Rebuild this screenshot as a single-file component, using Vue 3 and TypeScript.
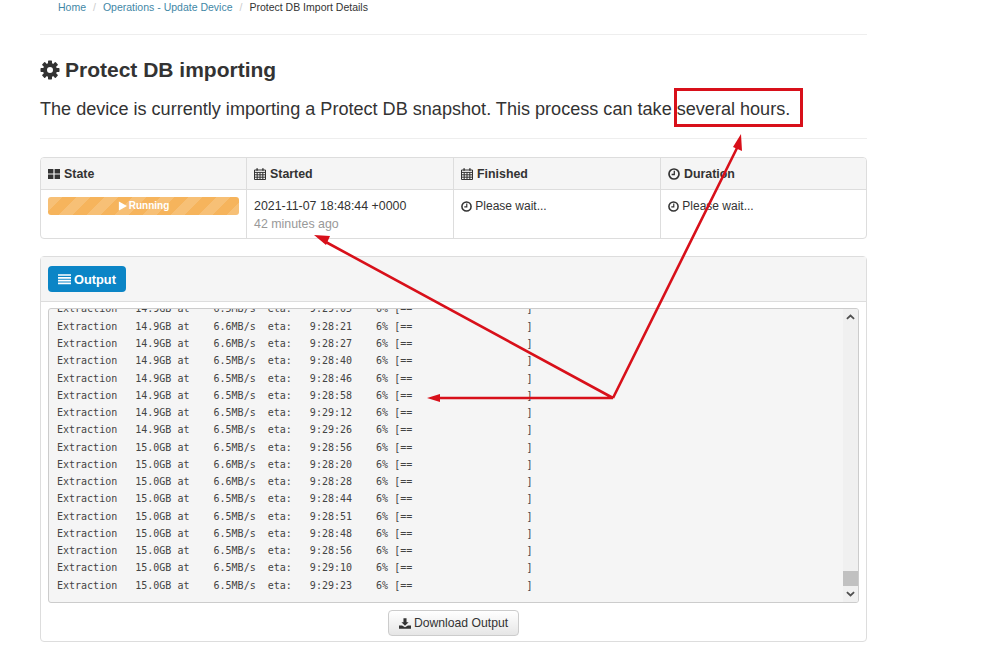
<script setup lang="ts">
interface Row { size: string; rate: string; eta: string }
const raw = '14.9 6.5 9:29:05|14.9 6.6 9:28:21|14.9 6.6 9:28:27|14.9 6.5 9:28:40|14.9 6.5 9:28:46|14.9 6.5 9:28:58|14.9 6.5 9:29:12|14.9 6.5 9:29:26|15.0 6.5 9:28:56|15.0 6.6 9:28:20|15.0 6.6 9:28:28|15.0 6.5 9:28:44|15.0 6.5 9:28:51|15.0 6.5 9:28:48|15.0 6.5 9:28:56|15.0 6.5 9:29:10|15.0 6.5 9:29:23'
const rows: Row[] = raw.split('|').map((r) => {
  const [size, rate, eta] = r.split(' ')
  return { size, rate, eta }
})
const log = rows
  .map((r) => `Extraction   ${r.size}GB at    ${r.rate}MB/s  eta:   ${r.eta}    6% [==                   ]`)
  .join('\n')
const teeth = [0, 45, 90, 135, 180, 225, 270, 315]
</script>

<template>
  <div class="page">
    <div class="content">
      <nav class="crumbs">
        <a>Home</a><span class="sep">/</span><a>Operations - Update Device</a><span class="sep">/</span><span>Protect DB Import Details</span>
      </nav>
      <hr class="rule first" />
      <h1 class="title">
        <svg class="gear" viewBox="0 0 24 24">
          <rect v-for="t in teeth" :key="t" x="9.6" y="0.6" width="4.8" height="6" rx="0.8" :transform="`rotate(${t} 12 12)`" />
          <path fill-rule="evenodd" d="M12 3.6a8.4 8.4 0 1 0 0 16.8 8.4 8.4 0 0 0 0-16.8zm0 4.8a3.6 3.6 0 1 1 0 7.2 3.6 3.6 0 0 1 0-7.2z" />
        </svg>
        Protect DB importing
      </h1>
      <p class="lead">The device is currently importing a Protect DB snapshot. This process can take several hours.</p>
      <hr class="rule second" />

      <section class="status">
        <div class="th">
          <svg class="ico" viewBox="0 0 12 12"><path d="M0 1h5.4v4.4H0zM6.6 1H12v4.4H6.6zM0 6.6h5.4V11H0zM6.6 6.6H12V11H6.6z" /></svg>
          State
        </div>
        <div class="th">
          <svg class="ico" viewBox="0 0 12 12"><use href="#cal" /></svg>
          Started
        </div>
        <div class="th">
          <svg class="ico" viewBox="0 0 12 12"><use href="#cal" /></svg>
          Finished
        </div>
        <div class="th last">
          <svg class="ico" viewBox="0 0 12 12"><use href="#clk" /></svg>
          Duration
        </div>
        <div class="td">
          <div class="bar">
            <svg class="play" viewBox="0 0 10 10"><path d="M1 0l9 5-9 5z" /></svg>
            Running
          </div>
        </div>
        <div class="td">
          <div>2021-11-07 18:48:44 +0000</div>
          <div class="ago">42 minutes ago</div>
        </div>
        <div class="td wait">
          <svg class="ico small" viewBox="0 0 12 12"><use href="#clk" /></svg>
          Please wait...
        </div>
        <div class="td wait last">
          <svg class="ico small" viewBox="0 0 12 12"><use href="#clk" /></svg>
          Please wait...
        </div>
      </section>

      <section class="panel">
        <header class="panel-head">
          <button class="btn-output" type="button">
            <svg class="ico bars" viewBox="0 0 14 12"><path d="M0 .8h14v1.8H0zM0 3.8h14v1.8H0zM0 6.8h14v1.8H0zM0 9.8h14v1.8H0z" /></svg>
            Output
          </button>
        </header>
        <div class="panel-body">
          <div class="logbox">
            <pre class="log">{{ log }}</pre>
            <div class="scroll">
              <svg class="chev" viewBox="0 0 10 6"><path d="M1 5l4-3.6L9 5" /></svg>
              <div class="track"><div class="thumb"></div></div>
              <svg class="chev" viewBox="0 0 10 6"><path d="M1 1l4 3.6L9 1" /></svg>
            </div>
          </div>
          <div class="actions">
            <button class="btn-dl" type="button">
              <svg class="ico dl" viewBox="0 0 14 12"><path d="M5.2 0h3.6v4.4h2.4L7 8.6 2.8 4.4h2.4zM0 8.4h3.6L7 10.4l3.4-2H14V12H0z" /></svg>
              Download Output
            </button>
          </div>
        </div>
      </section>
    </div>

    <svg class="marks" width="999" height="658" viewBox="0 0 999 658">
      <defs>
        <g id="cal">
          <path fill="none" stroke="currentColor" stroke-width="1" d="M.5 2h11v9.5H.5zM.5 4.4h11M3.2 4.4v7M6 4.4v7M8.8 4.4v7M.5 6.8h11M.5 9.2h11" />
          <path fill="currentColor" d="M2.4.2h1.4v2.6H2.4zM8.2.2h1.4v2.6H8.2z" />
        </g>
        <g id="clk">
          <circle cx="6" cy="6" r="5" fill="none" stroke="currentColor" stroke-width="1.7" />
          <path fill="none" stroke="currentColor" stroke-width="1.3" d="M6.3 2.8v3.7H3.6" />
        </g>
      </defs>
      <rect class="box" x="675.5" y="89.5" width="126" height="36" />
      <path class="line" d="M613 398L738 146M613 398L324 241M613 398H438" />
      <path class="head" d="M741 134l1 17-9-4zM314 235l16 1-4 9zM427 398l13-4v8z" />
    </svg>
  </div>
</template>

<style>
html, body { margin: 0; background: #fff; }
</style>

<style scoped>
.page {
  position: relative;
  width: 999px;
  height: 658px;
  overflow: hidden;
  background: #fff;
  color: #333;
  font-family: "Liberation Sans", Arial, sans-serif;
}
.content {
  width: 827px;
  margin-left: 40px;
}
.crumbs {
  height: 14px;
  padding-left: 18px;
  font-size: 10.5px;
  line-height: 14px;
  color: #333;
}
.crumbs a { color: #3f87a6; }
.sep { padding: 0 7px; color: #ccc; }
.rule {
  margin: 0;
  border: 0;
  border-top: 1px solid #eee;
}
.first { margin-top: 20px; }
.title {
  display: flex;
  align-items: center;
  gap: 5px;
  margin: 21px 0 0;
  font-size: 21px;
  line-height: 28px;
  font-weight: 700;
  color: #333;
}
.gear { width: 20px; height: 20px; fill: #333; }
.lead {
  margin: 13px 0 0;
  font-size: 18.08px;
  line-height: 24px;
  white-space: nowrap;
}
.second { margin-top: 17px; }
.status {
  display: grid;
  grid-template-columns: 206px 207px 207px 1fr;
  grid-template-rows: 32px 48px;
  box-sizing: border-box;
  height: 82px;
  margin-top: 18px;
  border: 1px solid #ddd;
  border-radius: 4px;
  font-size: 12.4px;
  overflow: hidden;
}
.th {
  display: flex;
  align-items: center;
  gap: 4px;
  padding-left: 7px;
  background: #f5f5f5;
  border-right: 1px solid #ddd;
  border-bottom: 1px solid #ddd;
  font-weight: 700;
  color: #333;
}
.td {
  padding: 7px 7px 0;
  border-right: 1px solid #ddd;
  line-height: 18px;
}
.wait { font-size: 12px; }
.last { border-right: 0; }
.ico {
  width: 12px;
  height: 12px;
  fill: currentColor;
  color: #333;
  vertical-align: -2px;
}
.small { width: 11px; height: 11px; margin-right: 0; }
.bar {
  display: flex;
  align-items: center;
  justify-content: center;
  gap: 2px;
  height: 18px;
  border-radius: 3px;
  font-size: 10px;
  font-weight: 700;
  color: #fff;
  background-color: #f6b45c;
  background-image: linear-gradient(135deg, rgba(255,255,255,.16) 25%, transparent 25%, transparent 50%, rgba(255,255,255,.16) 50%, rgba(255,255,255,.16) 75%, transparent 75%);
  background-size: 28px 28px;
}
.play { width: 9px; height: 10px; fill: #fff; }
.ago { color: #999; }
.panel {
  box-sizing: border-box;
  height: 386px;
  margin-top: 17px;
  border: 1px solid #ddd;
  border-radius: 4px;
}
.panel-head {
  display: flex;
  align-items: center;
  box-sizing: border-box;
  height: 45px;
  padding-left: 7px;
  background: #f5f5f5;
  border-bottom: 1px solid #ddd;
}
.btn-output {
  display: flex;
  align-items: center;
  gap: 3px;
  height: 26px;
  padding: 0 10px;
  border: 0;
  border-radius: 4px;
  background: #0b85c6;
  color: #fff;
  font: 700 12.8px "Liberation Sans", Arial, sans-serif;
}
.bars { width: 13px; height: 12px; color: #fff; }
.panel-body { padding: 6px 7px 0; }
.logbox {
  display: flex;
  box-sizing: border-box;
  height: 295px;
  border: 1px solid #ccc;
  border-radius: 3px;
  background: #f5f5f5;
  overflow: hidden;
}
.log {
  flex: 1;
  display: flex;
  align-items: flex-end;
  margin: 0;
  padding: 0 0 8px 8px;
  overflow: hidden;
  font-family: "DejaVu Sans Mono", monospace;
  font-size: 10px;
  line-height: 17.27px;
  color: #444;
}
.scroll {
  display: flex;
  flex-direction: column;
  align-items: center;
  width: 15px;
  background: #f0f0f0;
}
.chev {
  flex: none;
  width: 9px;
  height: 6px;
  margin: 5px 0;
  fill: none;
  stroke: #505050;
  stroke-width: 2;
}
.track {
  flex: 1;
  display: flex;
  flex-direction: column;
  justify-content: flex-end;
  width: 100%;
}
.thumb { height: 15px; background: #c1c1c1; }
.actions {
  display: flex;
  justify-content: center;
  margin-top: 7px;
}
.btn-dl {
  display: flex;
  align-items: center;
  gap: 3px;
  height: 26px;
  padding: 0 10px;
  border: 1px solid #ccc;
  border-radius: 4px;
  background: linear-gradient(#fff, #e6e6e6);
  color: #333;
  font: 12.2px "Liberation Sans", Arial, sans-serif;
}
.dl { width: 12px; height: 11px; }
.marks {
  position: absolute;
  inset: 0;
  pointer-events: none;
}
.box { fill: none; stroke: #d8101a; stroke-width: 3; }
.line { fill: none; stroke: #d8101a; stroke-width: 2.6; }
.head { fill: #d8101a; }
</style>
